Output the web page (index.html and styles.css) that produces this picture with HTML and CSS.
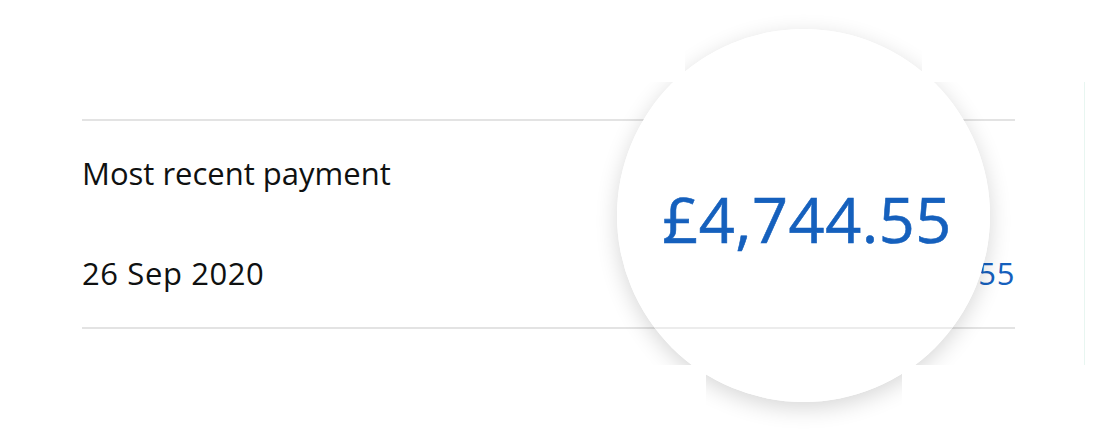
FILE: index.html
```html
<!DOCTYPE html>
<html lang="en-GB">
<head>
    <meta charset="UTF-8">
    <meta name="viewport" content="width=device-width, initial-scale=1.0">
    <title>Most recent payment</title>
    <link rel="stylesheet" href="styles.css">
</head>
<body>
    <div class="stage">
        <div class="card">
            <div class="payment-row">
                <div class="payment-info">
                    <p class="payment-label">Most recent payment</p>
                    <p class="payment-date">26 Sep 2020</p>
                </div>
                <p class="payment-amount">£4,744.55</p>
            </div>
        </div>

        <!-- magnifier over the amount -->
        <div class="magnifier">
            <div class="lens">
                <span class="lens-line"></span>
                <p class="lens-amount">£4,744.55</p>
            </div>
        </div>
    </div>
</body>
</html>
```

FILE: styles.css
```css
:root {
    --text-color: #0f1111;
    --link-color: #1560bd;
    --line-color: #e3e3e3;
    --card-edge: #e8f6f1;
}
* {
    box-sizing: border-box;
    margin: 0;
    padding: 0;
}
body {
    font-family: 'Open Sans', 'Noto Sans', sans-serif;
    background: #ffffff;
    color: var(--text-color);
    width: 1100px;
    height: 434px;
    overflow: hidden;
}
.stage {
    position: relative;
    width: 1100px;
    height: 434px;
    padding-top: 82px;
}
.card {
    width: 1085px;
    height: 283px;
    padding: 37px 69px 0 82px;
    border-right: 1px solid var(--card-edge);
}
.payment-row {
    display: flex;
    justify-content: space-between;
    align-items: flex-end;
    border-top: 2px solid var(--line-color);
    border-bottom: 2px solid var(--line-color);
    padding: 34px 0 36px;
    font-size: 31px;
    line-height: 36px;
}
.payment-info {
    display: flex;
    flex-direction: column;
    gap: 64px;
}
.payment-date,
.payment-amount {
    letter-spacing: 0.6px;
}
.payment-amount {
    color: var(--link-color);
}
.magnifier {
    position: absolute;
    left: 617px;
    top: 29px;
    width: 373px;
    height: 373px;
}
.magnifier::before {
    content: '';
    position: absolute;
    inset: 0;
    border-radius: 50%;
    box-shadow: 0 6px 22px rgba(0, 0, 0, 0.16);
    clip-path: polygon(68px -100px, 305px -100px, 305px 53px, 467px 53px, 467px 336px,
        285px 336px, 285px 500px, 89px 500px, 89px 336px, -617px 336px, -617px 53px, 68px 53px);
}
.lens {
    position: relative;
    width: 100%;
    height: 100%;
    border-radius: 50%;
    background: #ffffff;
    overflow: hidden;
}
.lens-line {
    position: absolute;
    left: 0;
    right: 0;
    top: 298px;
    height: 2px;
    background: #ececec;
}
.lens-amount {
    padding: 155px 0 0 7px;
    text-align: center;
    font-size: 63px;
    letter-spacing: 0.5px;
    line-height: 70px;
    color: var(--link-color);
    -webkit-text-stroke: 0.6px var(--link-color);
}
```
